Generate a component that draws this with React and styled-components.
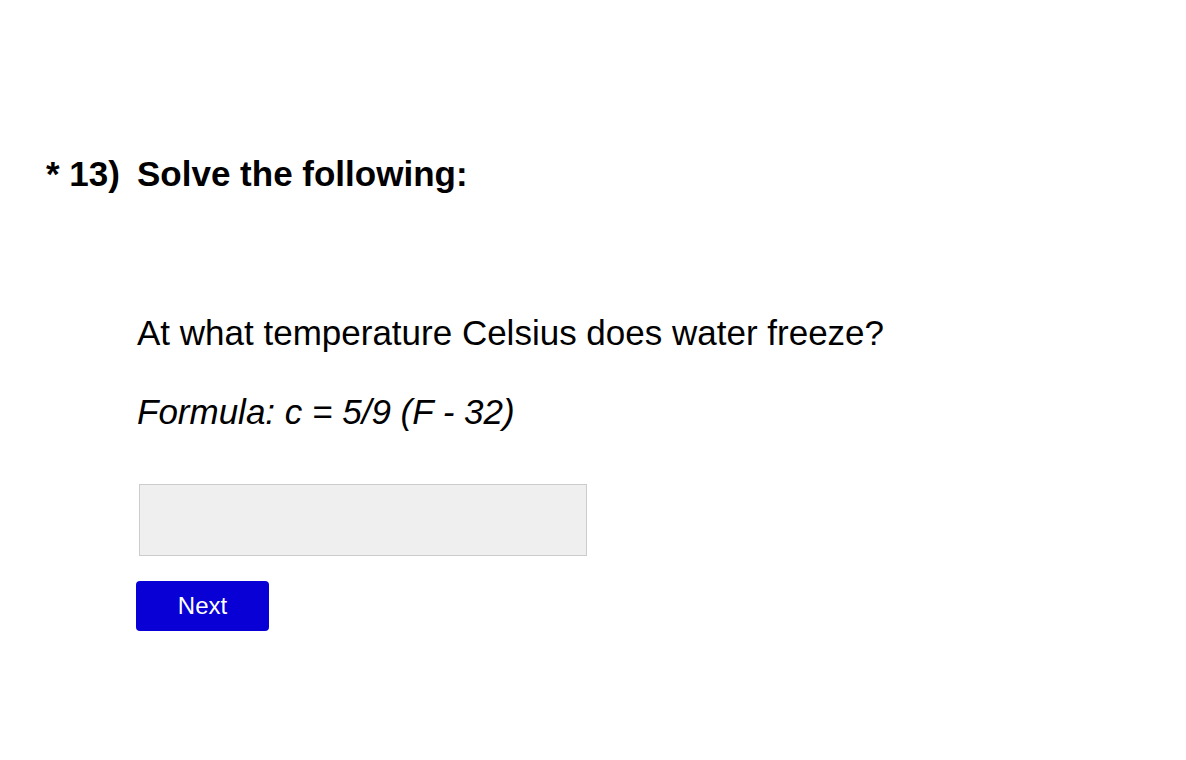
import styled, { createGlobalStyle } from "styled-components";

const Global = createGlobalStyle`
  html, body {
    margin: 0;
    padding: 0;
    background: #ffffff;
    font-family: "Liberation Sans", Arial, sans-serif;
    color: #000;
  }
`;

const Page = styled.div`
  padding: 150px 0 0 46px;
`;

const Heading = styled.div`
  display: flex;
  align-items: baseline;
  font-size: 35px;
  font-weight: bold;
  line-height: 48px;
`;

const Number = styled.span`
  width: 91px;
  flex-shrink: 0;
`;

const Body = styled.div`
  padding: 115px 0 0 91px;
`;

const Question = styled.p`
  margin: 0;
  font-size: 35px;
  line-height: 40px;
`;

const Formula = styled.p`
  margin: 39px 0 0 0;
  font-size: 35px;
  font-style: italic;
  line-height: 40px;
`;

const Answer = styled.input`
  display: block;
  box-sizing: border-box;
  margin: 52px 0 0 2px;
  width: 448px;
  height: 72px;
  background: #efefef;
  border: 1px solid #cccccc;
  outline: none;
  font-family: inherit;
  font-size: 24px;
  padding: 0 12px;
`;

const NextButton = styled.button`
  display: block;
  margin: 25px 0 0 -1px;
  width: 133px;
  height: 50px;
  border: none;
  border-radius: 4px;
  background: #0800d4;
  color: #ffffff;
  font-family: inherit;
  font-size: 24px;
  cursor: pointer;
`;

export default function App() {
  return (
    <>
      <Global />
      <Page>
        <Heading>
          <Number>* 13)</Number>
          <span>Solve the following:</span>
        </Heading>
        <Body>
          <Question>At what temperature Celsius does water freeze?</Question>
          <Formula>Formula: c = 5/9 (F - 32)</Formula>
          <Answer type="text" />
          <NextButton>Next</NextButton>
        </Body>
      </Page>
    </>
  );
}
